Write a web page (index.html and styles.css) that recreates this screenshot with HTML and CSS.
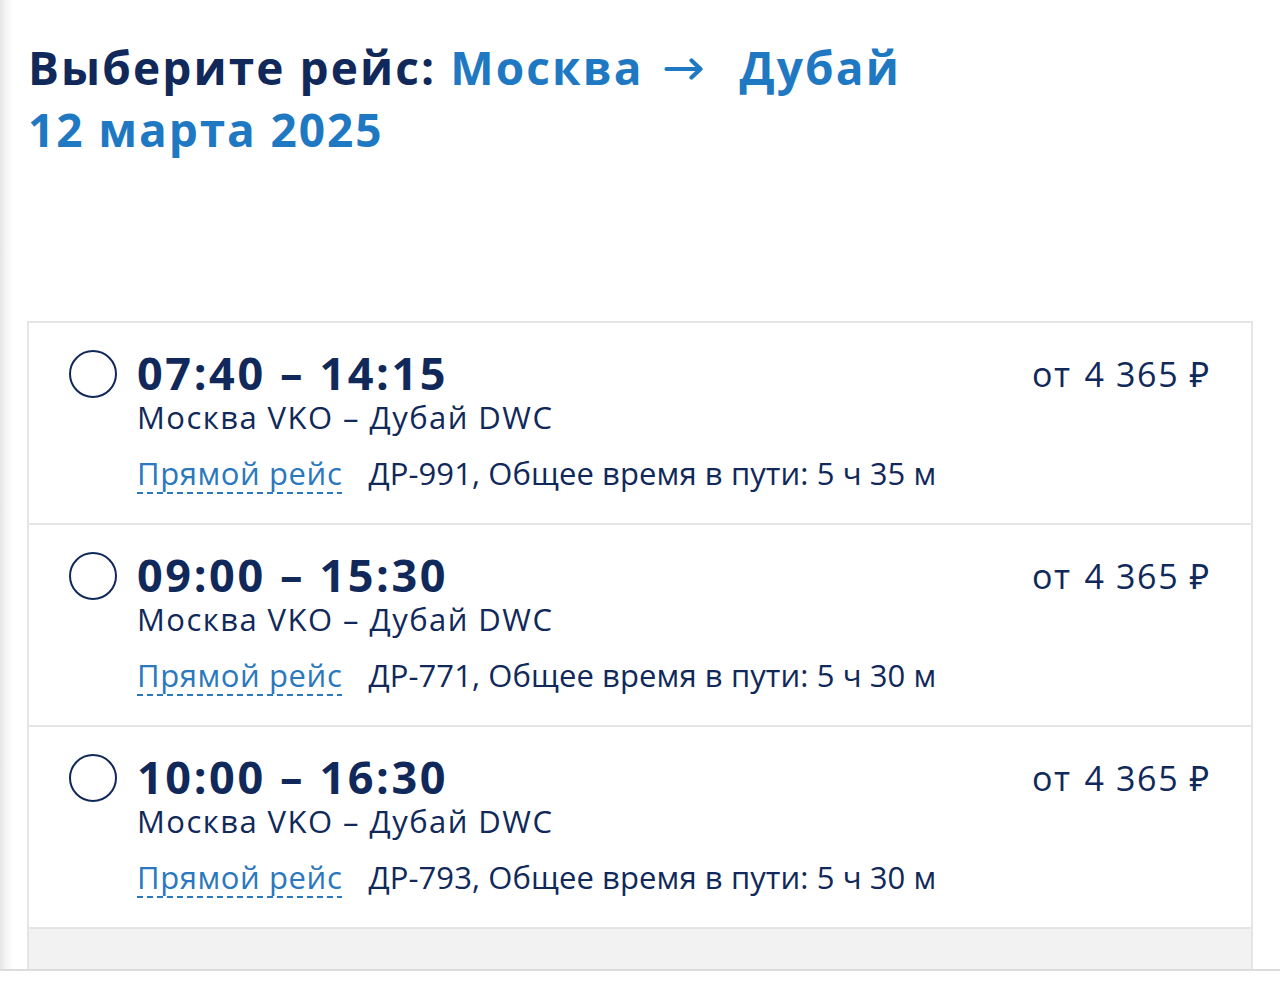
FILE: index.html
```html
<!DOCTYPE html>
<html lang="ru">
<head>
<meta charset="utf-8">
<title>Выберите рейс</title>
<link rel="stylesheet" href="styles.css">
</head>
<body>
<div class="page">
  <header class="head">
    <h1 class="title"><span class="dark">Выберите рейс:</span> <span class="blue">Москва<svg class="arrow" viewBox="0 0 40 22" width="40" height="22" aria-hidden="true"><path d="M2.5 11H36.5M27.5 2.5L36.5 11L27.5 19.5" fill="none" stroke="currentColor" stroke-width="4.2" stroke-linecap="round" stroke-linejoin="round"/></svg>Дубай</span></h1>
    <div class="date">12 марта 2025</div>
  </header>

  <div class="list">
    <div class="row">
      <div class="radio"></div>
      <div class="info">
        <div class="time">07:40 – 14:15</div>
        <div class="route">Москва VKO – Дубай DWC</div>
        <div class="meta"><span class="direct">Прямой рейс</span><span class="detail">ДР-991, Общее время в пути: 5 ч 35 м</span></div>
      </div>
      <div class="price"><span class="from">от</span><span class="sum">4 365 ₽</span></div>
    </div>
    <div class="row">
      <div class="radio"></div>
      <div class="info">
        <div class="time">09:00 – 15:30</div>
        <div class="route">Москва VKO – Дубай DWC</div>
        <div class="meta"><span class="direct">Прямой рейс</span><span class="detail">ДР-771, Общее время в пути: 5 ч 30 м</span></div>
      </div>
      <div class="price"><span class="from">от</span><span class="sum">4 365 ₽</span></div>
    </div>
    <div class="row">
      <div class="radio"></div>
      <div class="info">
        <div class="time">10:00 – 16:30</div>
        <div class="route">Москва VKO – Дубай DWC</div>
        <div class="meta"><span class="direct">Прямой рейс</span><span class="detail">ДР-793, Общее время в пути: 5 ч 30 м</span></div>
      </div>
      <div class="price"><span class="from">от</span><span class="sum">4 365 ₽</span></div>
    </div>
    <div class="row-more"></div>
  </div>
</div>
</body>
</html>
```

FILE: styles.css
```css
* { box-sizing: border-box; }
html, body { margin: 0; padding: 0; background: #fff; }
body {
  font-family: "Open Sans", "Noto Sans", sans-serif;
  color: #10295a;
}
.page {
  height: 971px;
  overflow: hidden;
  border-bottom: 2px solid #dcdcdc;
  background: linear-gradient(to right, #e4e4e4 0, #f5f5f5 6px, #fff 14px);
  padding: 37px 27px 0 27px;
}
.head { padding-left: 1px; }
.title {
  margin: 0;
  font-size: 46px;
  line-height: 60px;
  font-weight: 700;
  letter-spacing: 2.1px;
  white-space: nowrap;
}
.dark { color: #10295a; }
.blue { color: #1f79c2; }
.arrow {
  display: inline-block;
  vertical-align: 5px;
  margin: 0 36px 0 20px;
}
.date {
  margin-top: 2px;
  font-size: 46px;
  line-height: 60px;
  font-weight: 700;
  color: #1f79c2;
  letter-spacing: 1.9px;
}
.list {
  margin-top: 162px;
  border: 2px solid #e5e5e5;
  border-bottom: none;
  background: #fff;
}
.row {
  display: flex;
  align-items: flex-start;
  height: 202px;
  padding: 27px 40px 0 40px;
  border-bottom: 2px solid #e5e5e5;
}
.radio {
  flex: none;
  width: 48px;
  height: 48px;
  border: 2.5px solid #10295a;
  border-radius: 50%;
}
.info {
  flex: 1;
  margin-left: 20px;
}
.time {
  font-size: 45px;
  line-height: 46px;
  font-weight: 700;
  letter-spacing: 2.6px;
  color: #10295a;
}
.route {
  font-size: 31px;
  line-height: 40px;
  letter-spacing: 1.45px;
  color: #10295a;
  margin-top: 1px;
}
.meta {
  display: flex;
  align-items: baseline;
  margin-top: 16px;
  font-size: 31px;
  line-height: 40px;
}
.direct {
  color: #2a78bd;
  letter-spacing: 0.6px;
  padding-bottom: 1px;
  background-image: linear-gradient(to right, #2a78bd 0, #2a78bd 6px, transparent 6px);
  background-size: 10px 2px;
  background-repeat: repeat-x;
  background-position: 0 100%;
}
.detail { margin-left: 26px; color: #10295a; letter-spacing: 0.1px; }
.price {
  flex: none;
  display: flex;
  align-items: baseline;
  margin-top: 2px;
  font-size: 34px;
  line-height: 44px;
  color: #10295a;
}
.from { margin-right: 13px; letter-spacing: 1.5px; }
.sum { letter-spacing: 1.6px; }
.row-more {
  height: 60px;
  background: #f2f2f2;
}
```
